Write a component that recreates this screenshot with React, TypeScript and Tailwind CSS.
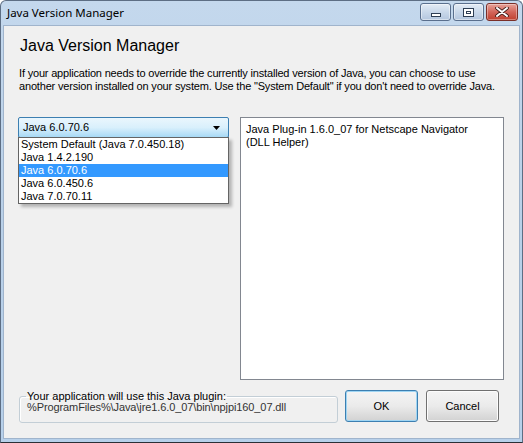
import { useState } from 'react'

const versions = [
  'System Default (Java 7.0.450.18)',
  'Java 1.4.2.190',
  'Java 6.0.70.6',
  'Java 6.0.450.6',
  'Java 7.0.70.11',
]

function CaptionButton({ kind }: { kind: 'min' | 'max' | 'close' }) {
  if (kind === 'close') {
    return (
      <div className="w-[32px] h-[18px] rounded-[3px] border border-[#7a2f28] bg-gradient-to-b from-[#e7a39a] via-[#d2655a] to-[#c0402f] flex items-center justify-center shadow-[inset_0_0_0_1px_rgba(255,255,255,0.35)]">
        <svg width="14" height="10" viewBox="0 0 14 10">
          <path d="M2 1 L12 9 M12 1 L2 9" stroke="#3a1a16" strokeWidth="3.6" strokeLinecap="round" />
          <path d="M2 1 L12 9 M12 1 L2 9" stroke="#ffffff" strokeWidth="2" strokeLinecap="round" />
        </svg>
      </div>
    )
  }
  return (
    <div className="w-[31px] h-[18px] rounded-[3px] border border-[#5a6f8d] bg-gradient-to-b from-[#e4ecf5] via-[#c9d8ea] to-[#b4c6de] flex items-center justify-center shadow-[inset_0_0_0_1px_rgba(255,255,255,0.45)]">
      {kind === 'min' ? (
        <div className="w-[10px] h-[4px] mt-[5px] bg-white border border-[#2f3f55]" />
      ) : (
        <div className="w-[11px] h-[9px] border-[1px] border-[#2f3f55] bg-white flex items-center justify-center">
          <div className="w-[5px] h-[3px] border border-[#2f3f55]" />
        </div>
      )}
    </div>
  )
}

export default function App() {
  const [selected, setSelected] = useState(2)

  return (
    <div className="w-[523px] h-[443px] bg-white font-['Liberation_Sans',Arial,sans-serif] text-[11px] text-black">
      <div className="w-full h-full rounded-t-[6px] border border-[#5d6e84] border-b-[#2a2f36] bg-gradient-to-b from-[#c4d8ed] via-[#b9d0e8] to-[#b7d0ea] flex flex-col">
        {/* Title bar */}
        <div className="h-[24px] shrink-0 flex items-center justify-between pl-[6px] pr-[4px]">
          <span className="font-['Noto_Sans',sans-serif] text-[11.5px] text-black leading-none">Java Version Manager</span>
          <div className="flex items-center gap-[2px] -mt-[2px]">
            <CaptionButton kind="min" />
            <CaptionButton kind="max" />
            <CaptionButton kind="close" />
          </div>
        </div>

        {/* Client area */}
        <div className="flex-1 mx-[2px] mb-[3px] bg-[#f0f0f0] border border-[#a0b4cc] flex flex-col pl-[14px] pr-[15px] pt-[10px]">
          <h1 className="text-[16px] leading-[19px] ml-[2px]">Java Version Manager</h1>
          <p className="mt-[12px] ml-[1px] leading-[13px] text-[11px] whitespace-nowrap tracking-[-0.18px]">
            If your application needs to override the currently installed version of Java, you can choose to use
            <br />
            another version installed on your system. Use the "System Default" if you don't need to override Java.
          </p>

          <div className="mt-[24px] flex gap-[11px]">
            {/* Version combo */}
            <div className="relative w-[211px] h-[21px]">
              <div className="h-full rounded-[2px] border border-[#3c7fb1] bg-gradient-to-b from-[#eaf6fd] via-[#d9f0fc] to-[#a7d9f5] flex items-center justify-between pl-[4px] pr-[8px]">
                <span>{versions[selected]}</span>
                <svg width="7" height="4" viewBox="0 0 7 4">
                  <path d="M0 0 H7 L3.5 4 Z" fill="#000" />
                </svg>
              </div>
              <ul className="absolute left-0 top-[20px] w-[211px] bg-white border border-[#646464] shadow-[3px_3px_3px_rgba(0,0,0,0.25)] z-10">
                {versions.map((v, i) => (
                  <li
                    key={v}
                    onClick={() => setSelected(i)}
                    className={
                      i === selected
                        ? 'h-[13px] leading-[13px] pl-[2px] bg-[#3399ff] text-white'
                        : 'h-[13px] leading-[13px] pl-[2px]'
                    }
                  >
                    {v}
                  </li>
                ))}
              </ul>
            </div>

            {/* Plugin list */}
            <div className="w-[264px] h-[263px] bg-white border border-[#828790] pl-[5px] pt-[5px] leading-[13px]">
              Java Plug-in 1.6.0_07 for Netscape Navigator
              <br />
              (DLL Helper)
            </div>
          </div>

          <div className="mt-[10px] flex items-start">
            <fieldset className="w-[319px] h-[32px] ml-[1px] mt-[1px] border border-[#c3ced6] rounded-[3px] pl-[7px] pr-[4px] shadow-[inset_1px_1px_0_#ffffff]">
              <legend className="px-[1px] leading-[11px] -ml-[1px]">Your application will use this Java plugin:</legend>
              <div className="text-[#333] leading-[13px] -mt-[1px] tracking-[-0.1px]">%ProgramFiles%\Java\jre1.6.0_07\bin\npjpi160_07.dll</div>
            </fieldset>
            <button className="ml-[7px] w-[73px] h-[32px] rounded-[3px] border border-[#3c7fb1] bg-gradient-to-b from-[#f4f4f4] via-[#ebebeb] to-[#d2d2d2] shadow-[inset_0_0_0_1px_#9fd5f3] text-[11px]">
              OK
            </button>
            <button className="ml-[8px] w-[73px] h-[32px] rounded-[3px] border border-[#707070] bg-gradient-to-b from-[#f4f4f4] via-[#ebebeb] to-[#d2d2d2] shadow-[inset_0_0_0_1px_#fcfcfc] text-[11px]">
              Cancel
            </button>
          </div>
        </div>
      </div>
    </div>
  )
}
